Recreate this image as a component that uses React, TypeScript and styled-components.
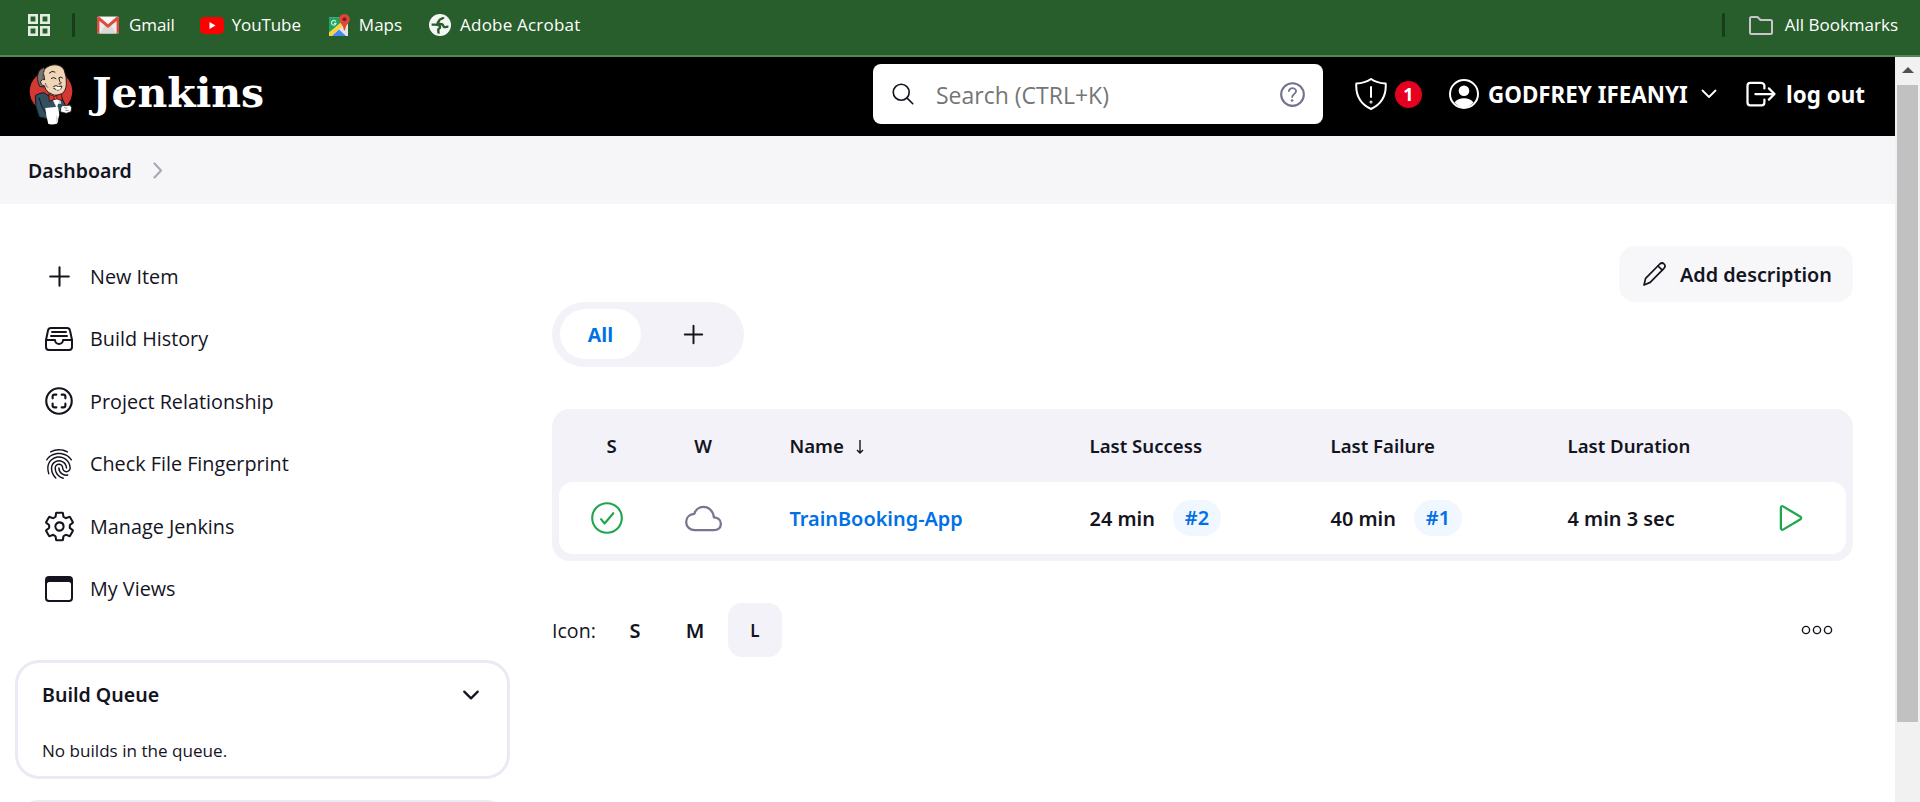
import React from "react";
import styled, { createGlobalStyle } from "styled-components";
import {
  IoAddOutline,
  IoBrowsersOutline,
  IoChevronDownOutline,
  IoCloudOutline,
  IoFileTrayFullOutline,
  IoFingerPrintOutline,
  IoHelpCircleOutline,
  IoLogOutOutline,
  IoPlayOutline,
  IoScanCircleOutline,
  IoSearchOutline,
  IoSettingsOutline,
} from "react-icons/io5";

const ink = "#14141f";
const link = "#0070e6";
const panel = "#f3f2f8";
const green = "#1ea64b";

const GlobalStyle = createGlobalStyle`
  * { box-sizing: border-box; }
  body { margin: 0; background: #fff; color: ${ink}; font-family: "Open Sans", "Noto Sans", sans-serif; overflow: hidden; }
  svg { display: block; flex: none; }
  a { color: inherit; text-decoration: none; }
  button, input { font: inherit; color: inherit; border: 0; background: none; padding: 0; outline: 0; }
`;

const Window = styled.div`
  display: flex;
  flex-direction: column;
  width: 1920px;
  height: 802px;
  overflow: hidden;
`;

/* Browser bookmarks */
const BookmarkBar = styled.nav`
  display: flex;
  align-items: center;
  flex: none;
  height: 57px;
  padding: 0 22px 5px 28px;
  background: #285d2c;
  border-bottom: 2px solid #55835a;
  color: #fff;
  font-size: 17px;
  white-space: nowrap;
`;

const BarDivider = styled.span`
  width: 3px;
  height: 24px;
  border-radius: 1px;
  background: #193c1c;
`;

const Bookmark = styled.a<{ $gap?: number; $before: number; $spacing?: number }>`
  display: flex;
  align-items: center;
  gap: ${(p) => p.$gap ?? 9}px;
  margin-left: ${(p) => p.$before}px;
  letter-spacing: ${(p) => p.$spacing ?? 0}px;
`;

const BookmarkName = styled.span`
  padding-bottom: 2px;
`;

const Spacer = styled.span`
  flex: 1;
`;

const Browser = styled.div`
  display: flex;
  flex: 1;
  min-height: 0;
`;

const Page = styled.div`
  flex: 1;
  min-width: 0;
  overflow: hidden;
`;

const Scrollbar = styled.div`
  display: flex;
  flex-direction: column;
  align-items: center;
  width: 25px;
  background: #f1f1f1;
`;

const ScrollArrow = styled.div`
  display: flex;
  height: 28px;
  padding-top: 10px;
`;

const ScrollThumb = styled.div`
  width: 21px;
  height: 637px;
  background: #c1c1c1;
`;

/* Header */
const Header = styled.header`
  display: flex;
  align-items: center;
  height: 79px;
  padding: 0 29px 5px 29px;
  background: #000;
  color: #fff;
`;

const Brand = styled.a`
  display: flex;
  align-items: center;
  gap: 19px;
  flex: 1;
`;

const Wordmark = styled.span`
  margin-top: -3px;
  font-family: "DejaVu Serif", serif;
  font-size: 41px;
  font-weight: 700;
  line-height: 56px;
`;

const SearchBox = styled.label`
  display: flex;
  align-items: center;
  width: 450px;
  height: 60px;
  padding: 0 14px 0 17px;
  border-radius: 8px;
  background: #fff;
  color: ${ink};
`;

const SearchInput = styled.input`
  flex: 1;
  min-width: 0;
  height: 60px;
  padding: 2px 0 0 20px;
  font-size: 23px;
  &::placeholder { color: #757575; opacity: 1; }
`;

const HelpIcon = styled(IoHelpCircleOutline)`
  color: #73728e;
`;

const Alerts = styled.a`
  display: flex;
  align-items: center;
  gap: 8px;
  margin-left: 32px;
`;

const AlertCount = styled.span`
  width: 27px;
  height: 27px;
  border-radius: 50%;
  background: #e6001f;
  font: 700 18px/27px "Open Sans", sans-serif;
  text-align: center;
`;

const HeaderLink = styled.a<{ $before: number }>`
  display: flex;
  align-items: center;
  margin-left: ${(p) => p.$before}px;
  font-family: "Noto Sans", sans-serif;
  font-size: 22.4px;
  font-weight: 660;
  line-height: 30px;
  white-space: nowrap;
`;

const HeaderLabel = styled.span<{ $before: number; $width: number }>`
  box-sizing: content-box;
  width: ${(p) => p.$width}px;
  padding: 2px 0 0 ${(p) => p.$before}px;
`;

const Breadcrumbs = styled.nav`
  display: flex;
  align-items: center;
  gap: 21px;
  height: 68px;
  padding-left: 28px;
  background: #f6f6f8;
  font-family: "Noto Sans", sans-serif;
  font-size: 19.5px;
  font-weight: 560;
`;

const Body = styled.div`
  display: flex;
`;

/* Side panel */
const Side = styled.aside`
  width: 552px;
  padding: 41px 42px 0 15px;
`;

const Task = styled.a`
  display: flex;
  align-items: center;
  height: 62.5px;
  padding-left: 26px;
  font-size: 19.8px;
`;

const TaskIcon = styled.span`
  display: flex;
  justify-content: center;
  width: 36px;
  margin-right: 13px;
`;

const Pane = styled.section<{ $after?: number }>`
  height: 119px;
  margin-top: ${(p) => p.$after}px;
  padding: 18px 24px 0 24px;
  border: 3px solid #ebeaf4;
  border-radius: 24px;
`;

const PaneTitle = styled.div`
  display: flex;
  align-items: center;
  justify-content: space-between;
  height: 27px;
  font-family: "Noto Sans", sans-serif;
  font-size: 19.6px;
  font-weight: 560;
`;

const PaneText = styled.p`
  margin: 31px 0 0;
  font-size: 17.1px;
  line-height: 24px;
`;

/* Main panel */
const Main = styled.main`
  display: flex;
  flex-direction: column;
  align-items: flex-start;
  flex: 1;
  padding: 42px 42px 0 0;
`;

const AddDescription = styled.button`
  display: flex;
  align-items: center;
  align-self: flex-end;
  gap: 14px;
  width: 234px;
  height: 56px;
  padding-left: 24px;
  border-radius: 16px;
  background: #f7f7f9;
  font-family: "Noto Sans", sans-serif;
  font-size: 19.8px;
  font-weight: 560;
  white-space: nowrap;
`;

const Tabs = styled.div`
  display: flex;
  gap: 9px;
  height: 65px;
  padding: 7px 8px 8px;
  border-radius: 33px;
  background: ${panel};
`;

const Tab = styled.a<{ $active?: boolean }>`
  display: flex;
  align-items: center;
  justify-content: center;
  width: ${(p) => (p.$active ? 81 : 86)}px;
  border-radius: 25px;
  background: ${(p) => (p.$active ? "#fff" : "transparent")};
  color: ${(p) => (p.$active ? link : ink)};
  font-size: 19.5px;
  font-weight: 700;
`;

const JobTable = styled.div`
  align-self: stretch;
  margin-top: 42px;
  padding: 0 7px 7px;
  border-radius: 18px;
  background: ${panel};
  font-family: "Noto Sans", sans-serif;
  font-weight: 560;
`;

const Columns = styled.div`
  display: grid;
  grid-template-columns: 96px 96px 300px 241px 237px 212px 1fr;
  align-items: center;
`;

const TableHead = styled(Columns)`
  height: 73px;
  font-size: 18.6px;
`;

const JobRow = styled(Columns)`
  height: 72px;
  border-radius: 14px;
  background: #fff;
  font-size: 19.9px;
`;

const IconCell = styled.div<{ $shift?: number }>`
  display: flex;
  justify-content: center;
  padding-left: ${(p) => p.$shift ?? 0}px;
`;

const Cell = styled.div`
  display: flex;
  align-items: center;
  padding-left: 38.5px;
  white-space: nowrap;
`;

const JobLink = styled.a`
  color: ${link};
`;

const BuildBadge = styled.a`
  height: 36px;
  margin-left: 18px;
  padding: 0 12px;
  border-radius: 18px;
  background: #f1f7fe;
  color: ${link};
  line-height: 36px;
`;

const PlayIcon = styled(IoPlayOutline)`
  margin-left: -6.5px;
  color: ${green};
`;

const SortArrow = styled.svg`
  margin: 2px 0 0 12px;
`;

const Footer = styled.div`
  display: flex;
  align-items: center;
  align-self: stretch;
  gap: 6px;
  height: 54px;
  margin-top: 42px;
  padding-right: 20px;
`;

const SizeLabel = styled.span`
  width: 50px;
  font-size: 19.6px;
`;

const SizeOption = styled.button<{ $active?: boolean }>`
  width: 54px;
  height: 54px;
  border-radius: 14px;
  background: ${(p) => (p.$active ? panel : "transparent")};
  font-family: "Noto Sans", sans-serif;
  font-size: ${(p) => (p.$active ? 17 : 20)}px;
  font-weight: 560;
`;

const JenkinsLogo = () => (
  <svg width="44" height="62" viewBox="27 24 132 186">
    <ellipse cx="93" cy="109" rx="64" ry="62" fill="#d33833" />
    <path d="M46 122q10-8 26-9l26 18 26-6 12 26-18 20-8 18-30 2-22-5q-14-30-12-64z" fill="#335061" stroke="#10171c" strokeWidth="3" />
    <path d="M88 112l16 36 20-2-6-26z" fill="#bcdde6" />
    <path d="M98 126l12 36 10-36z" fill="#fff" />
    <path d="M57 128q4 24 22 50" fill="none" stroke="#10171c" strokeWidth="3" />
    <path d="M72 38C54 42 50 62 54 80l5 14 14 2 6-44z" fill="#797575" stroke="#231f20" strokeWidth="3" />
    <path d="M70 52C76 28 118 20 132 44q9 22 7 44-1 22-18 32-18 5-36-8-9-8-12-20-12-2-11-13 4-8 12-5z" fill="#f0d6b7" stroke="#231f20" strokeWidth="3" />
    <path d="M73 48q-8 12-6 26M76 84q2 10 8 14" fill="none" stroke="#6d6058" strokeWidth="3" />
    <path d="M88 54q8-9 17-3M94 70q8-6 14 1M117 68q7-5 11 1M117 70q0 11 7 14-2 4-7 3M101 94q9-5 14 1l11-2q-3 13-14 12l-11-5" fill="none" stroke="#231f20" strokeWidth="3" strokeLinecap="round" />
    <path d="M104 95l20 1-5 8h-10z" fill="#fff" />
    <path d="M86 117l18 7 20-8 3 21-19-6-20 8z" fill="#d33833" stroke="#3a0f0e" strokeWidth="2.5" />
    <circle cx="106" cy="128" r="5" fill="#ef3d3a" stroke="#3a0f0e" strokeWidth="2" />
    <path d="M76 159l38-4 4 24-7 27q-14 4-26 1-7-22-9-48z" fill="#fff" />
    <path d="M108 180q8 4 6 22l-6 3" fill="#dce0e2" />
    <path d="M122 158q6-10 14-6l14-2 5 8-2 12-14 5-17-4z" fill="#fff" stroke="#231f20" strokeWidth="2.5" />
    <path d="M133 158l9 2M136 166l10 1" stroke="#555" strokeWidth="2" />
  </svg>
);

const AppsIcon = () => (
  <svg width="22" height="22" fill="none" stroke="#e3ece3" strokeWidth="2.6">
    <path d="M1.3 1.3h7.4v7.4H1.3zM13.3 1.3h7.4v7.4h-7.4zM1.3 13.3h7.4v7.4H1.3zM13.3 13.3h7.4v7.4h-7.4z" />
  </svg>
);

const GmailIcon = () => (
  <svg width="22" height="18" viewBox="0 0 22 18">
    <rect width="22" height="17" y=".5" rx="1.6" fill="#ececec" />
    <path d="M3 17.500 8.500 8.800 11 11l2.500-2.200L19 17.500z" fill="#d9d9d9" />
    <path d="M2 1h18l-9 8.500z" fill="#f8f8f8" />
    <path d="M0 2.300Q.2.500 2 .5L11 8.300 20 .5q1.800 0 2 1.800v13.600q-.2 1.600-1.600 1.600H19.600V4.900L11 12 2.400 4.900v12.600H1.600Q.2 17.500 0 15.900z" fill="#dd4b3e" />
  </svg>
);

const YouTubeIcon = () => (
  <svg width="24" height="17" viewBox="0 0 24 17">
    <rect width="24" height="17" rx="4.5" fill="#f00" />
    <path d="M9.500 5v7l6-3.500z" fill="#fff" />
  </svg>
);

const MapsIcon = () => (
  <svg width="22" height="23" viewBox="0 0 22 23">
    <path d="M1 3.500h19V22H1z" fill="#e4e4e0" />
    <path d="M1 3.500h13l1 6L1 21z" fill="#1da462" />
    <path d="M1 18.500 14.500 7l2.500 3L3.500 22H1z" fill="#fdd23c" />
    <path d="M4 22l7-6.500L18 22z" fill="#4688f1" />
    <path d="M7.800 7.600A2.300 2.300 0 1 0 8 9.400H6" fill="none" stroke="#c5f0dc" strokeWidth="1.2" />
    <path d="M16.500 0a5.300 5.300 0 0 1 5.300 5.300c0 4-4.200 4.800-4.700 11h-1.200c-.5-6.200-4.700-7-4.700-11A5.300 5.300 0 0 1 16.500 0z" fill="#e0463a" />
    <circle cx="16.500" cy="5.300" r="2" fill="#8b1a12" />
  </svg>
);

const GlobeIcon = () => (
  <svg width="22" height="22" viewBox="0 0 22 22">
    <circle cx="11" cy="11" r="11" fill="#f4f7f4" />
    <path
      d="M14.500 3.200c-.3 2-3.700 1.300-4.200 3.100-.3 1.700-1.700 1.300-1.600 3 .1 1.300 3.500.3 4.900 1.300 1 .8.400 2.100 1.700 2.500 1.300.3 2.600-.6 4.100-.5M2.600 10.600h3.700c2.500.1 4.600.2 4.800 2.500.1 1.600-1.500 1.200-1.800 2.500-.2 1.500.4 2.500.2 4"
      fill="none"
      stroke="#285d2c"
      strokeWidth="2.4"
      strokeLinejoin="round"
    />
  </svg>
);

const FolderIcon = () => (
  <svg width="24" height="19" viewBox="0 0 24 19" fill="none" stroke="#c9c5ca" strokeWidth="2" strokeLinejoin="round">
    <path d="M1 2.500Q1 1 2.500 1h6l3 3h10Q23 4 23 5.500v11q0 1.500-1.500 1.500h-19Q1 18 1 16.500z" />
  </svg>
);

const ShieldIcon = () => (
  <svg width="32" height="32" viewBox="0 0 32 32" fill="none" stroke="#fff" strokeWidth="2" strokeLinecap="round" strokeLinejoin="round">
    <path d="M16 1Q10 5.200 1.300 5.500C.6 17.500 5.500 26.200 16 31 26.500 26.200 31.400 17.500 30.700 5.500 22 5.200 16 1 16 1z" />
    <path d="M16 9v10" />
    <circle cx="16" cy="24" r=".5" />
  </svg>
);

const UserIcon = () => (
  <svg width="30" height="30" viewBox="0 0 30 30">
    <circle cx="15" cy="15" r="14" fill="none" stroke="#fff" strokeWidth="2" />
    <circle cx="15" cy="11.800" r="5.300" fill="#fff" />
    <path d="M5.500 23.500Q9 19.300 15 19.300t9.500 4.200Q20.500 28.500 15 28.500T5.500 23.500z" fill="#fff" />
  </svg>
);

const PencilIcon = () => (
  <svg width="23" height="24" viewBox="0 0 23 24" fill="none" stroke={ink} strokeWidth="1.700" strokeLinecap="round" strokeLinejoin="round">
    <path d="M1 23l1.600-6.600L16.800 2q2.300-2 4.300 0t-.1 4.300L7.200 20.400z" />
    <path d="M15 4l4.300 4.200" />
  </svg>
);

const ThinChevron = ({ color, right }: { color: string; right?: boolean }) => (
  <svg width={right ? 10 : 16} height={right ? 17 : 10} fill="none" stroke={color} strokeWidth={right ? 2.2 : 1.8} strokeLinecap="round" strokeLinejoin="round">
    <path d={right ? "M1.500 1.500 8 8.500l-6.500 7" : "M1.500 1.500 8 8l6.500-6.500"} />
  </svg>
);

const SuccessIcon = () => (
  <svg width="32" height="32" fill="none" stroke={green} strokeWidth="2.100" strokeLinecap="round" strokeLinejoin="round">
    <circle cx="16" cy="16" r="14.800" />
    <path d="M10 17.200l3.600 4.300 8.700-10.300" />
  </svg>
);

const tasks: [React.ReactNode, string][] = [
  [<IoAddOutline size={33} />, "New Item"],
  [<IoFileTrayFullOutline size={32} />, "Build History"],
  [<IoScanCircleOutline size={34} />, "Project Relationship"],
  [<IoFingerPrintOutline size={32} />, "Check File Fingerprint"],
  [<IoSettingsOutline size={33} />, "Manage Jenkins"],
  [<IoBrowsersOutline size={32} />, "My Views"],
];

export default function App() {
  return (
    <Window>
      <GlobalStyle />
      <BookmarkBar>
        <AppsIcon />
        <Bookmark as="span" $before={22}><BarDivider /></Bookmark>
        <Bookmark $before={22} $gap={10} $spacing={-0.1}><GmailIcon /><BookmarkName>Gmail</BookmarkName></Bookmark>
        <Bookmark $before={25} $gap={8} $spacing={-0.1}><YouTubeIcon /><BookmarkName>YouTube</BookmarkName></Bookmark>
        <Bookmark $before={27} $gap={9}><MapsIcon /><BookmarkName>Maps</BookmarkName></Bookmark>
        <Bookmark $before={27} $gap={9} $spacing={0.2}><GlobeIcon /><BookmarkName>Adobe Acrobat</BookmarkName></Bookmark>
        <Spacer />
        <BarDivider />
        <Bookmark $before={24} $gap={12}><FolderIcon /><BookmarkName>All Bookmarks</BookmarkName></Bookmark>
      </BookmarkBar>

      <Browser>
        <Page>
          <Header>
            <Brand><JenkinsLogo /><Wordmark>Jenkins</Wordmark></Brand>
            <SearchBox>
              <IoSearchOutline size={26} />
              <SearchInput placeholder="Search (CTRL+K)" />
              <HelpIcon size={33} />
            </SearchBox>
            <Alerts><ShieldIcon /><AlertCount>1</AlertCount></Alerts>
            <HeaderLink $before={27}>
              <UserIcon />
              <HeaderLabel $before={9} $width={213}>GODFREY IFEANYI</HeaderLabel>
              <ThinChevron color="#fff" />
            </HeaderLink>
            <HeaderLink $before={26}>
              <IoLogOutOutline size={36} />
              <HeaderLabel $before={7} $width={80}>log out</HeaderLabel>
            </HeaderLink>
          </Header>
          <Breadcrumbs>Dashboard<ThinChevron color="#a9a8bb" right /></Breadcrumbs>

          <Body>
            <Side>
              {tasks.map(([icon, label]) => (
                <Task key={label}><TaskIcon>{icon}</TaskIcon>{label}</Task>
              ))}
              <Pane $after={40}>
                <PaneTitle>Build Queue<IoChevronDownOutline size={24} /></PaneTitle>
                <PaneText>No builds in the queue.</PaneText>
              </Pane>
              <Pane $after={21} />
            </Side>

            <Main>
              <AddDescription><PencilIcon />Add description</AddDescription>
              <Tabs>
                <Tab $active>All</Tab>
                <Tab><IoAddOutline size={31} /></Tab>
              </Tabs>

              <JobTable>
                <TableHead>
                  <IconCell $shift={9}>S</IconCell>
                  <IconCell>W</IconCell>
                  <Cell>
                    Name
                    <SortArrow width="8" height="14" fill="none" stroke={ink} strokeWidth="1.400">
                      <path d="M4 0v13M1 10l3 3 3-3" />
                    </SortArrow>
                  </Cell>
                  <Cell>Last Success</Cell>
                  <Cell>Last Failure</Cell>
                  <Cell>Last Duration</Cell>
                </TableHead>
                <JobRow>
                  <IconCell><SuccessIcon /></IconCell>
                  <IconCell><IoCloudOutline size={37} color="#77768f" /></IconCell>
                  <Cell><JobLink>TrainBooking-App</JobLink></Cell>
                  <Cell>24 min<BuildBadge>#2</BuildBadge></Cell>
                  <Cell>40 min<BuildBadge>#1</BuildBadge></Cell>
                  <Cell>4 min 3 sec</Cell>
                  <Cell><PlayIcon size={36} /></Cell>
                </JobRow>
              </JobTable>

              <Footer>
                <SizeLabel>Icon:</SizeLabel>
                <SizeOption>S</SizeOption>
                <SizeOption>M</SizeOption>
                <SizeOption $active>L</SizeOption>
                <Spacer />
                <svg width="32" height="10" fill="none" stroke={ink} strokeWidth="1.400">
                  <circle cx="5" cy="5" r="3.600" />
                  <circle cx="16" cy="5" r="3.600" />
                  <circle cx="27" cy="5" r="3.600" />
                </svg>
              </Footer>
            </Main>
          </Body>
        </Page>
        <Scrollbar>
          <ScrollArrow>
            <svg width="12" height="6"><path d="M0 6 6 0l6 6z" fill="#505050" /></svg>
          </ScrollArrow>
          <ScrollThumb />
        </Scrollbar>
      </Browser>
    </Window>
  );
}
